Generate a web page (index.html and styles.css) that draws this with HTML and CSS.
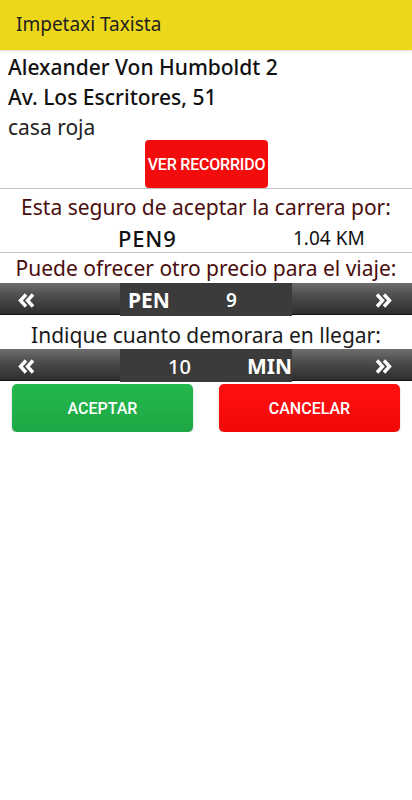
FILE: index.html
```html
<!DOCTYPE html>
<html lang="es">
  <head>
    <meta charset="UTF-8" />
    <title>Impetaxi Taxista</title>
    <link rel="stylesheet" href="styles.css">
  </head>
  <body>
    <header class="appbar">Impetaxi Taxista</header>

    <div class="address">
      <div class="street">Alexander Von Humboldt 2</div>
      <div class="street">Av. Los Escritores, 51</div>
      <div class="reference">casa roja</div>
    </div>

    <div class="routeRow">
      <button class="routeBtn">VER RECORRIDO</button>
    </div>

    <p class="prompt prompt-red">Esta seguro de aceptar la carrera por:</p>
    <div class="fare">
      <span class="fareAmount">PEN9</span>
      <span class="fareDistance">1.04 KM</span>
    </div>

    <p class="prompt prompt-red prompt-offer">Puede ofrecer otro precio para el viaje:</p>
    <div class="stepper">
      <span class="arrow">
        <svg width="17" height="15" viewBox="0 0 17 15"><path d="M8 1.5 2.5 7.5 8 13.5M15 1.5 9.5 7.5 15 13.5" fill="none" stroke="#fff" stroke-width="3.4"/></svg>
      </span>
      <div class="stepperValue">
        <span class="cell cell-currency">PEN</span>
        <span class="cell cell-price">9</span>
      </div>
      <span class="arrow arrow-right">
        <svg width="17" height="15" viewBox="0 0 17 15"><path d="M2 1.5 7.5 7.5 2 13.5M9 1.5 14.5 7.5 9 13.5" fill="none" stroke="#fff" stroke-width="3.4"/></svg>
      </span>
    </div>

    <p class="prompt prompt-eta">Indique cuanto demorara en llegar:</p>
    <div class="stepper">
      <span class="arrow">
        <svg width="17" height="15" viewBox="0 0 17 15"><path d="M8 1.5 2.5 7.5 8 13.5M15 1.5 9.5 7.5 15 13.5" fill="none" stroke="#fff" stroke-width="3.4"/></svg>
      </span>
      <div class="stepperValue">
        <span class="cell cell-minutes">10</span>
        <span class="cell cell-unit">MIN</span>
      </div>
      <span class="arrow arrow-right">
        <svg width="17" height="15" viewBox="0 0 17 15"><path d="M2 1.5 7.5 7.5 2 13.5M9 1.5 14.5 7.5 9 13.5" fill="none" stroke="#fff" stroke-width="3.4"/></svg>
      </span>
    </div>

    <div class="actions">
      <button class="actionBtn acceptBtn">ACEPTAR</button>
      <button class="actionBtn cancelBtn">CANCELAR</button>
    </div>
  </body>
</html>
```

FILE: styles.css
```css
body {
  margin: 0;
  font-family: "Noto Sans", "Open Sans", sans-serif;
  background: #ffffff;
  color: #1a1a1a;
}

.appbar {
  height: 50px;
  line-height: 48px;
  padding-left: 16px;
  background: #ecd71b;
  font-size: 19px;
  color: #222;
  box-shadow: 0 1px 2px rgba(0, 0, 0, 0.15);
}

.address {
  padding: 2px 8px 0;
  font-size: 21px;
  line-height: 30px;
}

.street {
  font-weight: 500;
  color: #111;
}

.reference {
  color: #222;
}

.routeRow {
  display: flex;
  justify-content: center;
  margin-top: -2px;
  padding-left: 1px;
  border-bottom: 1px solid #b7c4c8;
}

.routeBtn {
  width: 123px;
  height: 48px;
  padding: 0;
  background: #f20c0c;
  color: white;
  border: none;
  border-radius: 4px;
  font-family: Roboto, sans-serif;
  font-size: 16px;
  font-weight: 500;
  letter-spacing: -0.2px;
  white-space: nowrap;
  overflow: visible;
  cursor: pointer;
}

.prompt {
  margin: 0;
  text-align: center;
  font-size: 21px;
  line-height: 33px;
}

.prompt-red {
  color: #4a0d0d;
  padding-top: 2px;
}

.prompt-offer {
  line-height: 30px;
  padding-top: 0;
}

.prompt-eta {
  color: #1a1a1a;
  padding-top: 6px;
  line-height: 28px;
}

.fare {
  display: flex;
  align-items: center;
  height: 28px;
  border-bottom: 1px solid #b7c4c8;
}

.fareAmount {
  margin-left: 118px;
  width: 175px;
  font-size: 22px;
  font-weight: 500;
  letter-spacing: 0.8px;
  color: #111;
}

.fareDistance {
  font-size: 19px;
  color: #111;
}

.stepper {
  display: grid;
  grid-template-columns: 120px 1fr 120px;
  height: 31px;
  background: linear-gradient(#6e6e6e, #4a4a4a 45%, #2e2e2e);
  border-bottom: 1px solid #111;
  color: white;
}

.arrow {
  display: flex;
  align-items: center;
  padding: 2px 0 0 18px;
}

.arrow-right {
  padding-left: 83px;
}

.stepperValue {
  display: grid;
  grid-template-columns: 1fr 1fr;
  align-items: center;
  background: #3b3b3b;
  font-weight: bold;
}

.cell {
  line-height: 31px;
  padding-top: 2px;
}

.cell-currency {
  padding-left: 8px;
  font-size: 21px;
}

.cell-price {
  padding-left: 20px;
  font-size: 19px;
  font-weight: 600;
}

.cell-minutes {
  text-align: right;
  padding-right: 14px;
  font-size: 20px;
  font-weight: 500;
}

.cell-unit {
  padding-left: 42px;
  font-size: 21px;
}

.actions {
  display: flex;
  justify-content: space-between;
  padding: 3px 12px 0;
}

.actionBtn {
  width: 181px;
  height: 48px;
  color: white;
  border: none;
  border-radius: 5px;
  font-family: Roboto, sans-serif;
  font-size: 16px;
  font-weight: 500;
  box-shadow: 0 1px 2px rgba(0, 0, 0, 0.25);
  cursor: pointer;
}

.acceptBtn {
  background: linear-gradient(#24b84d, #1ea745);
}

.cancelBtn {
  background: linear-gradient(#ff1010, #f20808);
}
```
